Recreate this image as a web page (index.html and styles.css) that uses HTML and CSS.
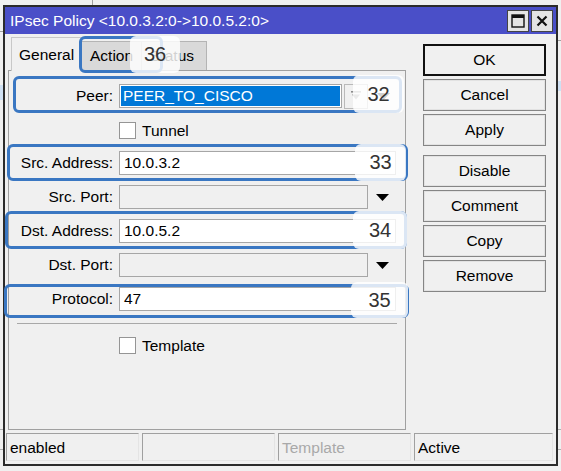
FILE: index.html
```html
<!DOCTYPE html>
<html>
<head>
<meta charset="utf-8">
<link rel="stylesheet" href="styles.css">
</head>
<body>
<div class="bg bg-v1"></div>
<div class="bg bg-h1"></div>
<div class="bg bg-h2"></div>
<div class="bg bg-blue1"></div>
<div class="bg bg-blue2"></div>
<div class="bg bg-h3"></div>
<div class="bg bg-h4"></div>

<div class="window">
  <div class="titlebar">
    <span class="title">IPsec Policy &lt;10.0.3.2:0-&gt;10.0.5.2:0&gt;</span>
    <span class="tbtn"><svg width="14" height="14" viewBox="0 0 14 14"><rect x="1" y="1" width="12" height="12" fill="none" stroke="#111" stroke-width="1.4"/><rect x="1" y="1" width="12" height="3" fill="#111"/></svg></span>
    <span class="tbtn"><svg width="12" height="12" viewBox="0 0 12 12"><path d="M1.5 1.5 L10.5 10.5 M10.5 1.5 L1.5 10.5" stroke="#111" stroke-width="2.2"/></svg></span>
  </div>
  <div class="main">
    <div class="left">
      <div class="tabs">
        <div class="tab active">General</div>
        <div class="tab">Action</div>
        <div class="tab last">Status</div>
      </div>
      <div class="panel">
        <div class="row first">
          <span class="label">Peer:</span>
          <span class="peerfield"><span class="peersel">PEER_TO_CISCO</span></span>
          <span class="ddbtn"><svg width="10" height="10" viewBox="0 0 10 10"><rect x="0" y="0" width="10" height="1.6" fill="#8a8a8a"/><polygon points="1,3.5 9,3.5 5,8.5" fill="#8a8a8a"/></svg></span>
          <span class="arrow narrow"><svg width="13" height="7" viewBox="0 0 13 7"><polygon points="0,0 13,0 6.5,7" fill="#000"/></svg></span>
        </div>
        <div class="checkrow tunnel"><span class="check"></span><span>Tunnel</span></div>
        <div class="row src">
          <span class="label">Src. Address:</span>
          <span class="field wide">10.0.3.2</span>
        </div>
        <div class="row">
          <span class="label">Src. Port:</span>
          <span class="field port"></span>
          <span class="arrow"><svg width="13" height="7" viewBox="0 0 13 7"><polygon points="0,0 13,0 6.5,7" fill="#000"/></svg></span>
        </div>
        <div class="row">
          <span class="label">Dst. Address:</span>
          <span class="field wide">10.0.5.2</span>
        </div>
        <div class="row">
          <span class="label">Dst. Port:</span>
          <span class="field port"></span>
          <span class="arrow"><svg width="13" height="7" viewBox="0 0 13 7"><polygon points="0,0 13,0 6.5,7" fill="#000"/></svg></span>
        </div>
        <div class="row">
          <span class="label">Protocol:</span>
          <span class="field wide">47</span>
        </div>
        <div class="sep"></div>
        <div class="checkrow template"><span class="check"></span><span>Template</span></div>
      </div>
    </div>
    <div class="side">
      <div class="btn ok">OK</div>
      <div class="btn">Cancel</div>
      <div class="btn">Apply</div>
      <div class="btn gap">Disable</div>
      <div class="btn">Comment</div>
      <div class="btn">Copy</div>
      <div class="btn">Remove</div>
    </div>
  </div>
  <div class="statusbar">
    <div class="cell">enabled</div>
    <div class="cell"></div>
    <div class="cell dim">Template</div>
    <div class="cell lastcell">Active</div>
  </div>
</div>

<div class="callout c32"></div>
<div class="callout c33"></div>
<div class="callout c34"></div>
<div class="callout c35"></div>
<div class="callout c36"></div>
<div class="num n32">32</div>
<div class="num n33">33</div>
<div class="num n34">34</div>
<div class="num n35">35</div>
<div class="num n36">36</div>
</body>
</html>
```
FILE: styles.css
```css
* { box-sizing: border-box; }
body {
  margin: 0;
  width: 561px;
  height: 471px;
  overflow: hidden;
  position: relative;
  background: #f0f0f0;
  font-family: "Liberation Sans", Arial, sans-serif;
  font-size: 15.5px;
  color: #000;
}

/* desktop background bits */
.bg { position: absolute; }
.bg-v1 { left: 92px; top: 0; width: 1px; height: 6px; background: #a0a0a0; }
.bg-h1 { left: 0; top: 31px; width: 4px; height: 1px; background: #a0a0a0; }
.bg-h2 { left: 557px; top: 40px; width: 4px; height: 1px; background: #a0a0a0; }
.bg-blue1 { left: 0; top: 85px; width: 4px; height: 15px; background: #cfe0f3; }
.bg-blue2 { left: 557px; top: 81px; width: 4px; height: 10px; background: #cfe0f3; }
.bg-h3 { left: 0; top: 429px; width: 561px; height: 1px; background: #b0b0b0; }
.bg-h4 { left: 0; top: 449px; width: 561px; height: 1px; background: #b0b0b0; }

.window {
  position: absolute;
  left: 3px;
  top: 5px;
  width: 555px;
  height: 461px;
  border: 2px solid #2b2b2b;
  background: #f0f0f0;
  display: flex;
  flex-direction: column;
  z-index: 1;
}
.titlebar {
  height: 27px;
  background: #4a4fc8;
  color: #fff;
  display: flex;
  align-items: center;
  padding: 0 3px 0 5px;
}
.title { flex: 1; }
.tbtn {
  width: 22px;
  height: 22px;
  margin-left: 2px;
  border: 1px solid #444;
  background: #e4e4e4;
  display: flex;
  align-items: center;
  justify-content: center;
}

.main { height: 396px; display: flex; }
.left { width: 401px; padding: 3px 0 0 3px; }
.tabs { height: 33px; display: flex; align-items: flex-end; padding-left: 3px; }
.tab {
  height: 29px;
  line-height: 27px;
  padding: 0 8px;
  background: #d9d9d9;
  border: 1px solid #b4b4b4;
  border-bottom: none;
  border-left: none;
}
.tab.active {
  height: 34px;
  margin-bottom: -1px;
  line-height: 34px;
  width: 71px;
  padding: 0 0 0 7px;
  background: #f0f0f0;
  border: 1px solid #c8c8c8;
  border-bottom: none;
  position: relative;
  z-index: 1;
}
.tab.last { width: 65px; }

.panel {
  width: 398px;
  height: 360px;
  border: 1px solid #a0a0a0;
  padding-top: 13px;
}
.row { display: flex; align-items: center; height: 24px; margin-top: 10px; }
.row.first { margin-top: 0; }
.row.src { margin-top: 12px; }
.label { width: 104px; margin-right: 6px; text-align: right; }
.field {
  height: 24px;
  border: 1px solid #a6a6a6;
  background: #fff;
  padding-left: 4px;
  line-height: 22px;
}
.wide { width: 277px; }
.port { width: 249px; background: #f0f0f0; }
.arrow { width: 28px; height: 24px; display: flex; align-items: center; justify-content: center; }
.arrow.narrow { width: 30px; }
.peerfield {
  width: 223px;
  height: 24px;
  border: 1px solid #a6a6a6;
  padding: 1px;
  background: #fff;
}
.peersel {
  display: block;
  height: 20px;
  line-height: 20px;
  background: #0078d7;
  color: #fff;
  padding-left: 2px;
}
.ddbtn {
  width: 24px;
  height: 25px;
  margin-left: 2px;
  border: 1px solid #b9b9b9;
  background: #f0f0f0;
  display: flex;
  align-items: center;
  justify-content: center;
}
.checkrow { display: flex; align-items: center; height: 17px; padding-left: 110px; }
.checkrow.tunnel { margin-top: 14px; }
.checkrow.template { margin-top: 13px; }
.check {
  width: 17px;
  height: 17px;
  border: 1px solid #959595;
  background: #fff;
  margin-right: 6px;
}
.sep { margin: 12px 0 0 8px; width: 380px; height: 1px; background: #a8a8a8; }

.side { width: 123px; margin-left: 17px; padding-top: 10px; }
.btn {
  height: 32px;
  margin-bottom: 3px;
  border: 1px solid #858585;
  box-shadow: inset 0 0 0 1px #e2e2e2;
  background: #f0f0f0;
  text-align: center;
  line-height: 30px;
}
.btn.ok { border: 2px solid #111; box-shadow: none; line-height: 28px; }
.btn.gap { margin-top: 9px; }

.statusbar { margin-top: 3px; height: 28px; display: flex; gap: 3px; padding-left: 1px; }
.cell {
  width: 133px;
  height: 28px;
  border-top: 1px solid #a0a0a0;
  border-left: 1px solid #a0a0a0;
  border-right: 1px solid #e4e4e4;
  border-bottom: 1px solid #e4e4e4;
  padding-left: 3px;
  line-height: 27px;
}
.cell.lastcell { width: 139px; }
.cell.dim { color: #a9a9a9; }

/* annotation overlays */
.callout {
  position: absolute;
  border: 3px solid #3a77c2;
  border-radius: 6px;
  z-index: 2;
}
.c32 { left: 13px; top: 76px; width: 389px; height: 37px; }
.c33 { left: 7px; top: 144px; width: 401px; height: 37px; }
.c34 { left: 5px; top: 211px; width: 402px; height: 38px; }
.c35 { left: 4px; top: 284px; width: 405px; height: 34px; }
.c36 { left: 79px; top: 36px; width: 84px; height: 37px; }
.num {
  position: absolute;
  z-index: 3;
  background: rgba(255, 255, 255, 0.82);
  border-radius: 6px;
  color: #333;
  font-size: 20px;
  display: flex;
  align-items: center;
  justify-content: center;
}
.n32 { left: 353px; top: 75px; width: 51px; height: 38px; }
.n33 { left: 355px; top: 144px; width: 51px; height: 37px; }
.n34 { left: 353px; top: 211px; width: 54px; height: 38px; }
.n35 { left: 351px; top: 282px; width: 57px; height: 36px; }
.n36 { left: 130px; top: 36px; width: 50px; height: 37px; }
```
